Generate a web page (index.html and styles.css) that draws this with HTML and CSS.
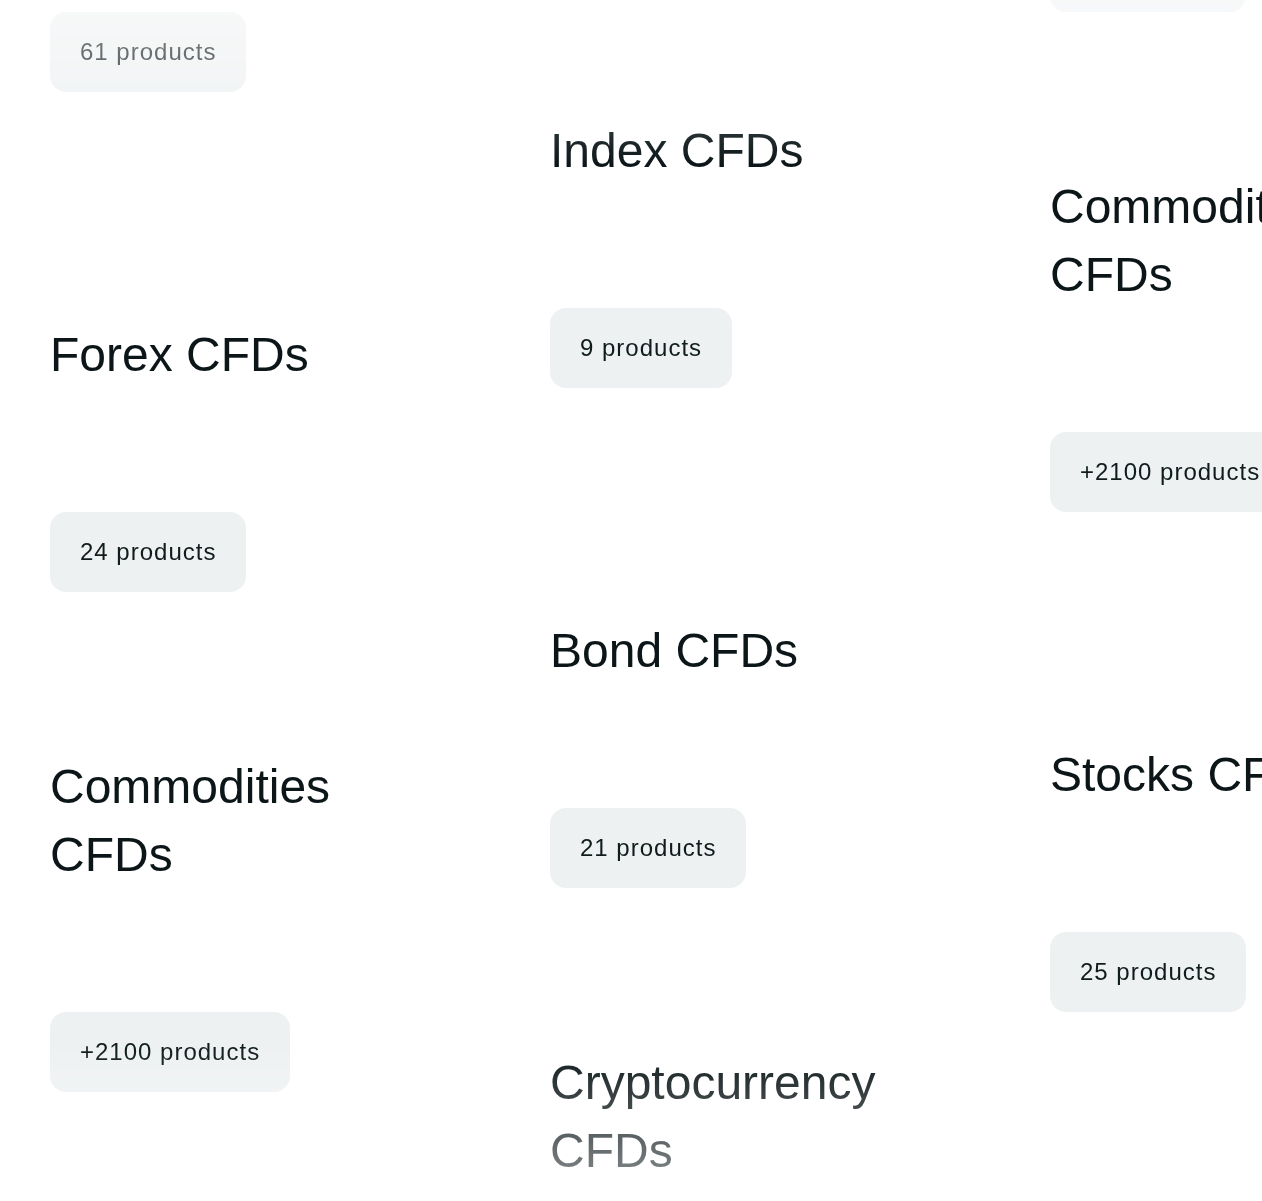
FILE: index.html
```html
<!DOCTYPE html>
<html lang="en">
<head>
<meta charset="utf-8">
<title>CFD markets</title>
<link rel="stylesheet" href="styles.css">
</head>
<body>
<main class="marquee">
  <div class="col col-1">
    <article class="card"><h3 class="title">Cryptocurrency CFDs</h3><span class="pill">61 products</span></article>
    <article class="card"><h3 class="title">Forex CFDs</h3><span class="pill">24 products</span></article>
    <article class="card"><h3 class="title">Commodities CFDs</h3><span class="pill">+2100 products</span></article>
    <article class="card"><h3 class="title">Stocks CFDs</h3><span class="pill">25 products</span></article>
  </div>
  <div class="col col-2">
    <article class="card"><h3 class="title">Index CFDs</h3><span class="pill">9 products</span></article>
    <article class="card"><h3 class="title">Bond CFDs</h3><span class="pill">21 products</span></article>
    <article class="card"><h3 class="title">Cryptocurrency CFDs</h3><span class="pill">61 products</span></article>
  </div>
  <div class="col col-3">
    <article class="card"><h3 class="title">Forex CFDs</h3><span class="pill">24 products</span></article>
    <article class="card"><h3 class="title">Commodities CFDs</h3><span class="pill">+2100 products</span></article>
    <article class="card"><h3 class="title">Stocks CFDs</h3><span class="pill">25 products</span></article>
    <article class="card"><h3 class="title">Index CFDs</h3><span class="pill">9 products</span></article>
  </div>
</main>
</body>
</html>
```

FILE: styles.css
```css
html, body {
  margin: 0;
  padding: 0;
  background: #ffffff;
  overflow: hidden;
}

body {
  font-family: "Liberation Sans", Arial, sans-serif;
  color: #0c1618;
}

.marquee {
  display: grid;
  grid-template-columns: repeat(3, 450px);
  column-gap: 50px;
  align-items: start;
  padding-left: 50px;
  height: 1201px;
  overflow: hidden;
  -webkit-mask-image: linear-gradient(to bottom,
    rgba(0, 0, 0, 0.45) 0px,
    rgba(0, 0, 0, 1) 165px,
    rgba(0, 0, 0, 1) calc(100% - 155px),
    rgba(0, 0, 0, 0.44) 100%);
  mask-image: linear-gradient(to bottom,
    rgba(0, 0, 0, 0.45) 0px,
    rgba(0, 0, 0, 1) 165px,
    rgba(0, 0, 0, 1) calc(100% - 155px),
    rgba(0, 0, 0, 0.44) 100%);
}

.col {
  display: flex;
  flex-direction: column;
}

.col-1 { margin-top: -408px; }
.col-2 { margin-top: -112px; }
.col-3 { margin-top: -488px; }

.card {
  height: 500px;
  display: flex;
  flex-direction: column;
  justify-content: flex-end;
  align-items: flex-start;
}

.title {
  margin: 0 0 123px;
  max-width: 370px;
  font-size: 48px;
  line-height: 68px;
  font-weight: 400;
  color: #0c1618;
}

.pill {
  display: flex;
  align-items: center;
  height: 80px;
  padding: 0 30px;
  box-sizing: border-box;
  background: #eef1f2;
  border-radius: 16px;
  font-size: 24px;
  letter-spacing: 1px;
  color: #101b1c;
  white-space: nowrap;
}
```
